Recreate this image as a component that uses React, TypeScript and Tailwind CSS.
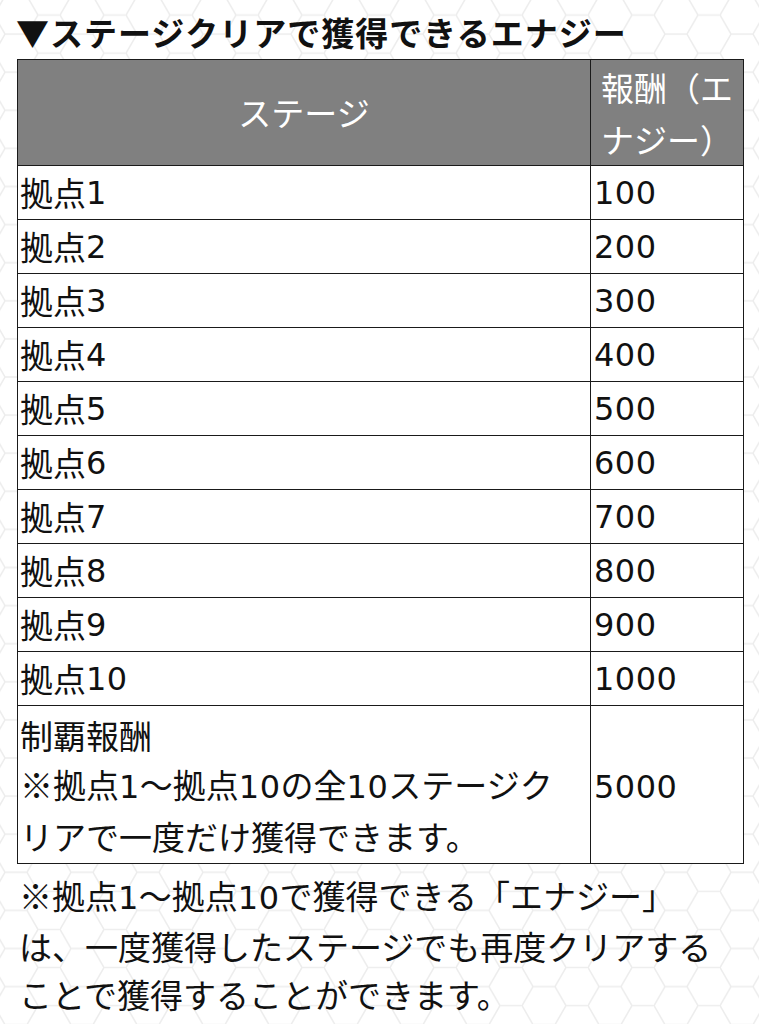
import React from "react";

const FONT = 'font-["Noto_Sans_CJK_JP",sans-serif]';

function T({ s }: { s: string }) {
  const parts = s.split(/(\d+)/);
  return (
    <>
      {parts.map((p, i) =>
        /^\d+$/.test(p) ? (
          <span key={i} className='font-["DejaVu_Sans",sans-serif] text-[32px] tracking-[0.5px]'>
            {p}
          </span>
        ) : (
          <React.Fragment key={i}>{p}</React.Fragment>
        )
      )}
    </>
  );
}

const rows = [
  ["拠点1", "100"],
  ["拠点2", "200"],
  ["拠点3", "300"],
  ["拠点4", "400"],
  ["拠点5", "500"],
  ["拠点6", "600"],
  ["拠点7", "700"],
  ["拠点8", "800"],
  ["拠点9", "900"],
  ["拠点10", "1000"],
];

function HexBackground() {
  const r = 22;
  const h = 38.1;
  const d = `M0,${h / 2} L${r / 2},0 L${1.5 * r},0 L${2 * r},${h / 2} L${1.5 * r},${h} L${r / 2},${h} Z M${2 * r},${h / 2} L${3 * r},${h / 2}`;
  return (
    <svg className="absolute inset-0 w-full h-full pointer-events-none" aria-hidden="true">
      <defs>
        <pattern id="hex" width={3 * r} height={h} patternUnits="userSpaceOnUse" x="-6" y="-4">
          <path d={d} fill="none" stroke="#ededed" strokeWidth="1.5" />
        </pattern>
      </defs>
      <rect width="100%" height="100%" fill="url(#hex)" />
    </svg>
  );
}

export default function App() {
  return (
    <div className={`relative w-[759px] min-h-[1024px] bg-white overflow-hidden ${FONT} text-[#111]`}>
      <HexBackground />
      <div className="relative flex flex-col">
        <div className="h-[59px] pl-[16px] pt-[6px] flex items-center text-[33px] font-bold tracking-[1px] text-[#111]">
          ▼ステージクリアで獲得できるエナジー
        </div>
        <div className="ml-[17px] w-[727px] border-[1.5px] border-[#1a1a1a] bg-white">
          <div className="flex h-[106px] bg-[#808080] text-white text-[33px] border-b-[1.5px] border-[#1a1a1a]">
            <div className="w-[573px] flex items-center justify-center border-r-[1.5px] border-[#1a1a1a]">ステージ</div>
            <div className="flex-1 flex items-center justify-center text-center leading-[52px]">
              報酬（エ<br />ナジー）
            </div>
          </div>
          {rows.map(([a, b]) => (
            <div key={a} className="flex h-[54px] text-[33px] border-b-[1.5px] border-[#1a1a1a]">
              <div className="w-[573px] flex items-center pl-[2px] border-r-[1.5px] border-[#1a1a1a]">
                <T s={a} />
              </div>
              <div className="flex-1 flex items-center pl-[3px]">
                <T s={b} />
              </div>
            </div>
          ))}
          <div className="flex text-[33px]">
            <div className="w-[573px] pl-[2px] pt-[5px] pb-[2px] leading-[49px] border-r-[1.5px] border-[#1a1a1a]">
              制覇報酬<br />
              <T s="※拠点1〜拠点10の全10ステージク" />
              <br />
              リアで一度だけ獲得できます。
            </div>
            <div className="flex-1 flex items-center pl-[3px] pt-[4px]">
              <T s="5000" />
            </div>
          </div>
        </div>
        <div className="pl-[19px] pt-[7px] text-[33px] leading-[48px]">
          <T s="※拠点1〜拠点10で獲得できる「エナジー」" />
          <br />
          は、一度獲得したステージでも再度クリアする<br />
          ことで獲得することができます。
        </div>
      </div>
    </div>
  );
}
